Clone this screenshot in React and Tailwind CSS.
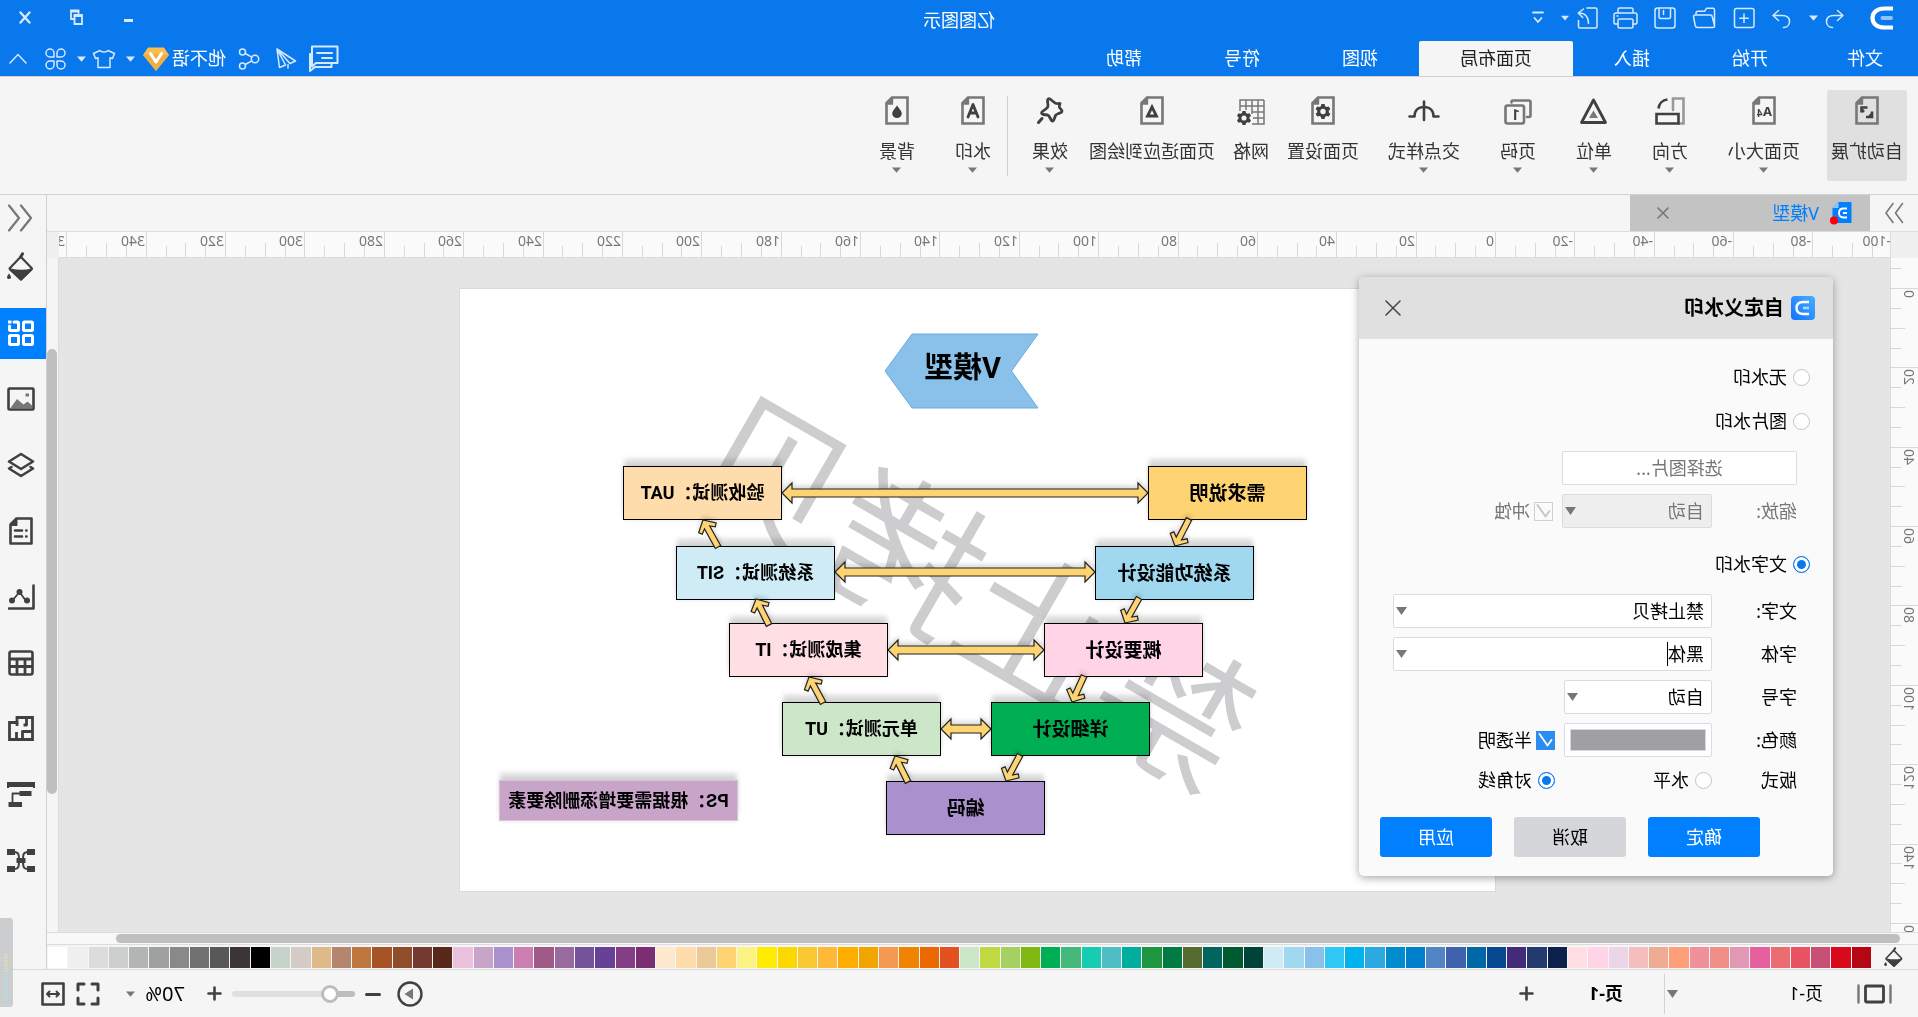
import React from "react";

/* ---------- small shared glyphs ---------- */

const Caret = ({ className = "" }) => (
  <svg className={className} width="9" height="6" viewBox="0 0 9 6" fill="currentColor" aria-hidden="true">
    <path d="M0 0.5h9L4.5 5.8z" />
  </svg>
);

const Svg = ({ w = 24, h = 24, box, className = "", sw = 1.5, children }) => (
  <svg
    className={className}
    width={w}
    height={h}
    viewBox={box || `0 0 ${w} ${h}`}
    fill="none"
    stroke="currentColor"
    strokeWidth={sw}
    strokeLinejoin="round"
    strokeLinecap="round"
    aria-hidden="true"
  >
    {children}
  </svg>
);

const DocOutline = ({ children }) => (
  <Svg w={24} h={29} sw={2}>
    <path d="M1.5 1.5H17l5.500 5.500v20.500h-21z" stroke="#777" strokeWidth="2.600" strokeLinejoin="miter" />
    <path d="M16.500 1.500v6.500h6" fill="#777" stroke="#777" strokeWidth="1.400" />
    {children}
  </Svg>
);

const gearPath =
  "M-1.6-7.4h3.2l.5 2.1 1.6.9 2.1-.7 1.6 2.8-1.6 1.4v1.8l1.6 1.4-1.6 2.8-2.1-.7-1.6.9-.5 2.1h-3.2l-.5-2.1-1.6-.9-2.1.7-1.6-2.8 1.6-1.4v-1.8l-1.6-1.4 1.6-2.8 2.1.7 1.6-.9zM0-2.7a2.7 2.7 0 1 0 0 5.4 2.7 2.7 0 0 0 0-5.4z";

const PaintBucket = ({ w = 28, h = 30 }) => (
  <Svg w={w} h={h} box="0 0 28 30" sw={2.2}>
    <path d="M14.5 4.5 3 16.5l11 11 11.500-11L14 4.500" />
    <path d="M14.300 5 12.500 1.800" strokeWidth="3" />
    <path d="M3.500 17.500c7 2 14 1.500 21.500 0L14 27.500z" fill="currentColor" />
    <path d="M26 21.500c1.400 2 1.900 2.800 1.900 3.700a1.900 1.900 0 0 1-3.800 0c0-.9.500-1.700 1.900-3.700z" fill="currentColor" stroke="none" />
  </Svg>
);

/* ---------- title bar ---------- */

const Logo = () => (
  <svg width="23" height="24" viewBox="0 0 23 24" aria-hidden="true">
    <path d="M0 2.500h8.500c7.500 0 12 4 12 9.500s-4.500 9.500-12 9.500H0" fill="none" stroke="#fff" strokeWidth="4.200" />
    <rect x="0" y="10" width="12.500" height="4" rx="2" fill="#8fc4fb" />
  </svg>
);

const icons = {
  undo: (
    <Svg w={20} h={22}>
      <path d="M7.500 3.500 2 8.500l5.500 5M2.500 8.500H11c4.500 0 7.500 2 7.500 6 0 3.500-2.500 6-6 6" />
    </Svg>
  ),
  redo: (
    <Svg w={20} h={22}>
      <path d="M12.500 3.500 18 8.500l-5.500 5M17.500 8.500H9c-4.500 0-7.500 2-7.500 6 0 3.500 2.500 6 6 6" />
    </Svg>
  ),
  create: (
    <Svg w={22} h={22}>
      <rect x="1" y="1.500" width="19.500" height="19" rx="2" />
      <path d="M11 7v8.500M6.700 11.200h8.600" />
    </Svg>
  ),
  open: (
    <Svg w={24} h={22}>
      <path d="M1.500 20V2.800c0-1 .5-1.500 1.500-1.500h6.500l2 3H18c1.500 0 2 .5 2 2V8M1.500 18.500 3.800 9.500c.2-1 .8-1.500 1.800-1.500h15c1.500 0 2 .7 1.800 2l-1.600 8.500c-.3 1.300-1 2-2.300 2H3c-1 0-1.500-.5-1.500-2z" />
    </Svg>
  ),
  save: (
    <Svg w={22} h={22}>
      <rect x="1" y="1" width="20" height="20" rx="2.500" />
      <path d="M5.500 1.500v8.500c0 1 .5 1.500 1.500 1.500h8.500c1 0 1.500-.5 1.500-1.500V1.500M12.500 3.500v4" />
    </Svg>
  ),
  print: (
    <Svg w={25} h={22}>
      <path d="M5 6V2.500C5 1.600 5.500 1 6.500 1h12c1 0 1.500.6 1.500 1.500V6M5 17H2.800C1.700 17 1 16.300 1 15.200V8c0-1.200.8-2 2-2h19c1.200 0 2 .8 2 2v7.200c0 1.100-.7 1.800-1.800 1.800H20" />
      <rect x="5" y="12" width="15" height="9" rx="1.500" />
      <path d="M20 9h1" />
    </Svg>
  ),
  share: (
    <Svg w={21} h={22}>
      <path d="M11 1H2.500C1.500 1 1 1.500 1 2.500v17c0 1 .5 1.500 1.500 1.500h15.500c1 0 1.500-.5 1.500-1.500v-6" />
      <path d="M14.500 2 19.800 6l-4.500 4.500M19 6c-5.500 0-9.500 3.500-9.500 10.500" />
    </Svg>
  ),
  customize: (
    <Svg w={12} h={14} sw={1.8}>
      <path d="M1 1.500h10M2.500 7l3.500 4 3.500-4" />
    </Svg>
  ),
};

const quickTools = [
  ["撤销", "ml-[21px] w-7", icons.undo],
  ["撤销列表", "w-[14px]", <Caret />],
  ["重做", "ml-[10px] w-8", icons.redo],
  ["新建", "w-[42px]", icons.create],
  ["打开", "w-[38px]", icons.open],
  ["保存", "w-10", icons.save],
  ["打印", "w-[38px]", icons.print],
  ["导出", "w-[38px]", icons.share],
  ["导出选项", "w-[8px]", <Caret />],
  ["自定义", "ml-[13px] w-5", icons.customize],
];

const TitleBar = () => (
  <div className="grid h-[41px] grid-cols-[1fr_auto_1fr] text-[#d6e9ff]">
    <div className="flex pb-[5px]">
      <div className="ml-[25px] flex items-center">
        <Logo />
      </div>
      {quickTools.map(([name, cls, icon]) => (
        <button key={name} aria-label={name} className={"flex shrink-0 items-center justify-center " + cls}>
          {icon}
        </button>
      ))}
    </div>
    <h1 className="flex items-center text-[18px] text-white">亿图图示</h1>
    <div className="flex justify-end pb-[7px]">
      <button aria-label="最小化" className="flex w-[52px] items-center justify-center pt-[6px]">
        <span className="h-[3px] w-[9px] bg-current" />
      </button>
      <button aria-label="还原" className="flex w-[52px] items-center justify-center">
        <Svg w={13} h={16} sw={1.8}>
          <path d="M4.500 4V1.500h7.500V10H8.500" strokeLinejoin="miter" />
          <path d="M1 6h7.500v9H1z" strokeLinejoin="miter" />
          <path d="M1 7h7.500M4.500 2.500H12" />
        </Svg>
      </button>
      <button aria-label="关闭" className="flex w-[51px] items-center justify-center">
        <Svg w={12} h={13} sw={2.4}>
          <path d="M1.500 1.500l9 10M10.500 1.500l-9 10" />
        </Svg>
      </button>
    </div>
  </div>
);

const menus = [
  ["文件", "pl-[35px] pr-[38px]"],
  ["开始", "px-[41px]"],
  ["插入", "px-[41px]"],
  ["页面布局", "px-[41px]"],
  ["视图", "px-[41px]"],
  ["符号", "px-[41px]"],
  ["帮助", "px-[41px]"],
];

const MenuBar = () => (
  <div className="flex h-[35px] justify-between text-[18px] text-white">
    <nav className="flex">
      {menus.map(([name, pad]) => (
        <button
          key={name}
          className={
            pad + " flex items-center " + (name === "页面布局" ? "rounded-t-[2px] bg-[#f5f5f5] text-[#222]" : "")
          }
        >
          {name}
        </button>
      ))}
    </nav>
    <div className="flex text-[#d6e9ff]">
      <button aria-label="消息" className="flex w-[38px] items-center justify-center">
        <Svg w={31} h={27} sw={2}>
          <path d="M27 9h2v17l-5-4H7.500v-4" />
          <path d="M1.500 1.500h25.500v20l-4-3.500H1.500z" />
          <path d="M7 8h15M7 13h10" />
        </Svg>
      </button>
      <button aria-label="发送" className="flex w-[38px] items-center justify-center">
        <Svg w={22} h={22}>
          <path d="M20 1 1.500 13l5.500 2.500L20 1l-2.500 18.500-6-2.500L20 1M9 16.500V20" />
        </Svg>
      </button>
      <button aria-label="分享" className="mr-[5px] flex w-9 items-center justify-center">
        <Svg w={22} h={22}>
          <circle cx="5" cy="11" r="3.700" />
          <circle cx="17.500" cy="4" r="3" />
          <circle cx="17.500" cy="18" r="3" />
          <path d="M8.200 9.200 14.800 5.500M8.200 12.800l6.600 3.700" />
        </Svg>
      </button>
      <button className="flex items-center gap-[2px] text-white">
        他不语
        <svg className="w-7" width="28" height="26" viewBox="0 0 28 26" aria-hidden="true">
          <path d="M6 1.500h16l5 7.500-13 16L1 9z" fill="#fbbd4e" />
          <path d="M1 9l13 16L27 9l-9-1z" fill="#eaa541" opacity=".6" />
          <path d="M8.500 7.500 14 16l5.500-8.500" fill="none" stroke="#fff" strokeWidth="3" strokeLinecap="round" strokeLinejoin="round" />
        </svg>
      </button>
      <button aria-label="帐户菜单" className="flex w-[22px] items-center justify-center">
        <Caret />
      </button>
      <button aria-label="主题" className="flex w-8 items-center justify-center">
        <Svg w={24} h={20}>
          <path d="M8 1.500c1.500 2 6.500 2 8 0l6.500 3-2 5-2.500-.7V18.500H6V8.800l-2.500.7-2-5z" />
        </Svg>
      </button>
      <button aria-label="主题选项" className="flex w-3 items-center justify-center">
        <Caret />
      </button>
      <button aria-label="应用" className="flex w-10 items-center justify-center">
        <Svg w={21} h={22}>
          <path d="M9 9V5a4 4 0 1 0-4 4zM12 9V5a4 4 0 1 1 4 4zM9 13v4a4 4 0 1 1-4-4zM12 13v4a4 4 0 1 0 4-4z" />
        </Svg>
      </button>
      <button aria-label="收起功能区" className="flex w-9 items-center justify-center">
        <Svg w={18} h={11}>
          <path d="M1 10l8-8.500L17 10" />
        </Svg>
      </button>
    </div>
  </div>
);

/* ---------- ribbon ---------- */

const ribbon = [
  {
    name: "自动扩展",
    cls: "w-20 rounded-[2px] bg-[#e0e0e0]",
    icon: (
      <DocOutline>
        <path d="M11.500 11.500h6v5M7 15.500v5.500h6M15 14l2 2M9.500 18.500l-2 2" stroke="#404040" strokeWidth="2.600" strokeLinejoin="miter" strokeLinecap="butt" />
      </DocOutline>
    ),
  },
  {
    name: "页面大小",
    cls: "ml-[7px] px-5",
    drop: true,
    icon: (
      <DocOutline>
        <text x="4" y="20" fontSize="13" fontWeight="700" fill="#404040" stroke="none" fontFamily="Noto Sans">A</text>
        <text x="13.500" y="21" fontSize="10" fontWeight="700" fill="#404040" stroke="none" fontFamily="Noto Sans">4</text>
      </DocOutline>
    ),
  },
  {
    name: "方向",
    cls: "px-5",
    drop: true,
    icon: (
      <Svg w={30} h={29} sw={2.6}>
        <path d="M12 14V2.500H1.500v25H6" stroke="#999" strokeLinejoin="miter" />
        <path d="M6.500 18h22v9.500h-22z" stroke="#404040" strokeLinejoin="miter" />
        <path d="M17.500 3.500c5 .5 8.500 4 9 9" stroke="#404040" strokeLinecap="butt" />
      </Svg>
    ),
  },
  {
    name: "单位",
    cls: "px-5",
    drop: true,
    icon: (
      <Svg w={29} h={29} sw={2.8}>
        <path d="M14.500 4 26.500 26.500h-24z" stroke="#404040" />
        <path d="M14.500 14.500l4.500 7.500h-9z" fill="#777" stroke="none" />
      </Svg>
    ),
  },
  {
    name: "页码",
    cls: "px-5",
    drop: true,
    icon: (
      <Svg w={28} h={29} sw={2.6}>
        <rect x="8" y="9.500" width="18.500" height="18" rx="2" stroke="#777" />
        <path d="M5 21H3c-1 0-1.500-.5-1.500-1.500V6c0-1 .5-1.500 1.500-1.500h16c1 0 1.500.5 1.500 1.500v.5" stroke="#777" />
        <text x="12" y="24" fontSize="15" fontWeight="700" fill="#404040" stroke="none" fontFamily="Roboto">1</text>
      </Svg>
    ),
  },
  {
    name: "交点样式",
    cls: "px-5",
    drop: true,
    icon: (
      <Svg w={32} h={29} sw={2.6}>
        <path d="M1.500 20.500h5c0-6 4-9.500 9.500-9.500s9.500 3.500 9.500 9.500h5M16 5.500V24" stroke="#404040" />
      </Svg>
    ),
  },
  {
    name: "页面设置",
    cls: "px-[9px]",
    icon: (
      <DocOutline>
        <path d={gearPath} transform="translate(12 15.500)" fill="#404040" fillRule="evenodd" stroke="none" />
      </DocOutline>
    ),
  },
  {
    name: "网格",
    cls: "px-[9px]",
    icon: (
      <Svg w={29} h={29} sw={1.5}>
        <path d="M1 4h24v11M1 4v24h12M7 4v24M13 4v14M19 4v10M1 10h24M1 16h12M1 22h11" stroke="#777" strokeLinecap="butt" strokeLinejoin="miter" />
        <path d={gearPath} transform="translate(21 22) scale(.95)" fill="#404040" fillRule="evenodd" stroke="none" />
      </Svg>
    ),
  },
  {
    name: "页面适应到绘图",
    cls: "px-[9px]",
    icon: (
      <DocOutline>
        <path d="M12 11l4.500 9h-9z" stroke="#404040" strokeWidth="2.800" strokeLinejoin="miter" />
      </DocOutline>
    ),
  },
  {
    name: "效果",
    cls: "px-[12px]",
    drop: true,
    icon: (
      <Svg w={28} h={29} sw={2.8}>
        <path d="M4 7.500Q7 8 9 7L14 3Q16.500 2 16.500 5L16 9.500Q16 11 17 12L21.500 15.500Q23.500 17.500 21 18.500L16.500 19Q15 19.500 14.500 21L12.500 24.500Q11 26 10 23.500L8.500 19.500Q8 18.500 6.500 18L3 16.500Q1.500 15.500 2.500 14L4.500 11.500Q5 10.500 4 7.500z" stroke="#404040" />
        <path d="M22 22.500l3.500 4" stroke="#404040" strokeWidth="3" />
      </Svg>
    ),
  },
  { divider: true },
  {
    name: "水印",
    cls: "px-4",
    drop: true,
    icon: (
      <DocOutline>
        <path d="M7 21l5-12.500L17 21M9 17h6" stroke="#404040" strokeWidth="2.800" />
      </DocOutline>
    ),
  },
  {
    name: "背景",
    cls: "px-6",
    drop: true,
    icon: (
      <DocOutline>
        <path d="M12 9.500c3 4 4.800 6 4.800 8a4.800 4.500 0 0 1-9.600 0c0-2 1.800-4 4.800-8z" fill="#404040" stroke="none" />
      </DocOutline>
    ),
  },
];

const Ribbon = () => (
  <div className="flex h-[119px] shrink-0 items-start border-y border-[#d2d2d2] bg-[#f5f5f5] pl-[11px] pt-[13px]">
    {ribbon.map((item, i) =>
      item.divider ? (
        <div key={i} className="ml-[12px] mt-[6px] h-20 w-px bg-[#cfcfcf]" />
      ) : (
        <button key={i} className={"flex h-[91px] shrink-0 flex-col items-center pt-[6px] " + item.cls}>
          {item.icon}
          <span className="mt-[17px] whitespace-nowrap text-[18px] leading-[18px] text-[#333]">{item.name}</span>
          {item.drop && <Caret className="mt-[7px] text-[#777]" />}
        </button>
      )
    )}
  </div>
);

/* ---------- document tabs, rulers ---------- */

const DocTabs = () => (
  <div className="flex h-[37px] shrink-0 border-b border-[#dcdcdc] bg-[#f5f5f5]">
    <button aria-label="展开左侧面板" className="flex w-12 items-center justify-center text-[#777]">
      <Svg w={20} h={22} sw={1.600}>
        <path d="M1.500 1.500l7 9.500-7 9.500M11 1.500l7 9.500-7 9.500" />
      </Svg>
    </button>
    <div className="flex w-60 items-center bg-[#c3c3c3] pl-[18px]">
      <svg width="24" height="26" viewBox="0 0 24 26" aria-hidden="true">
        <path d="M1.500 2h12l6 6v15h-18c-.7 0-1-.3-1-1V3c0-.7.3-1 1-1z" fill="#007fff" />
        <path d="M13.500 2v6h6z" fill="#8cc5ff" />
        <path d="M5 8.500h3.500c3 0 4.500 1.700 4.500 4.500s-1.500 4.500-4.500 4.500H5M5 13h4" fill="none" stroke="#fff" strokeWidth="1.800" />
        <circle cx="18" cy="20.500" r="4" fill="#f00" />
      </svg>
      <span className="ml-[9px] flex-1 text-[18px] text-[#007fff]">V模型</span>
      <button aria-label="关闭文档" className="mr-[27px] text-[#777]">
        <Svg w={12} h={12} sw={1.600}>
          <path d="M1 1l10 10M11 1L1 11" />
        </Svg>
      </button>
    </div>
  </div>
);

const UNIT = 79.37;
const ticks = (from, to) => {
  const out = [];
  for (let k = from; k <= to; k++) out.push(k);
  return out;
};

const HRuler = () => (
  <div className="relative h-[26px] overflow-hidden border-b border-l border-[#dcdcdc] bg-[#fafafa] text-[14px] leading-[17px] text-[#777]">
    {ticks(-20, 72).map((k) => {
      const major = k % 4 === 0;
      const half = k % 2 === 0;
      return (
        <div
          key={k}
          className={
            "absolute bottom-0 border-l border-[#d8d8d8] pl-[1px] " + (major ? "h-[25px]" : half ? "h-[14px]" : "h-[11px]")
          }
          style={{ left: Math.round(394 + (k * UNIT) / 4) }}
        >
          {major ? k * 5 : null}
        </div>
      );
    })}
  </div>
);

const VRuler = () => (
  <div className="relative overflow-hidden bg-[#fafafa] text-[14px] leading-[18px] text-[#777]">
    {ticks(-1, 32).map((k) => {
      const major = k % 4 === 0;
      const half = k % 2 === 0;
      return (
        <div
          key={k}
          className={"absolute right-0 border-t border-[#d8d8d8] " + (major ? "w-full" : half ? "w-[14px]" : "w-[11px]")}
          style={{ top: Math.round(30 + (k * UNIT) / 4) }}
        >
          {major && (
            <span className="absolute left-0 top-px rotate-180 [writing-mode:vertical-rl]">{k * 5}</span>
          )}
        </div>
      );
    })}
  </div>
);

/* ---------- drawing page ---------- */

/* Page content is placed in canvas coordinates; the page's corner is the origin. */
const OX = 423;
const OY = 289;

const nodes = [
  { t: "需求说明", x: 611, y: 466, c: "bg-[#fed472] text-[19px]" },
  { t: "系统功能设计", x: 664, y: 546, c: "bg-[#a0d8ef] text-[19px]" },
  { t: "概要设计", x: 715, y: 623, c: "bg-[#ffd4e6] text-[19px]" },
  { t: "详细设计", x: 768, y: 702, c: "bg-[#00af53] text-[19px]" },
  { t: "编码", x: 873, y: 781, c: "bg-[#aa91cd] text-[19px]" },
  { t: "单元测试：UT", x: 977, y: 702, c: "bg-[#cce6c8] text-[18px]" },
  { t: "集成测试：IT", x: 1030, y: 623, c: "bg-[#ffdfe4] text-[18px]" },
  { t: "系统测试：SIT", x: 1083, y: 546, c: "bg-[#ceebf6] text-[18px]" },
  { t: "验收测试：UAT", x: 1136, y: 466, c: "bg-[#fedcab] text-[18px]" },
];

const links = [
  [770, 1136, 493],
  [823, 1083, 572],
  [874, 1030, 650],
  [927, 977, 729],
];

/* tail x, tail y, tip x, tip y */
const steps = [
  [729, 519, 743, 546],
  [779, 598, 793, 623],
  [834, 676, 846, 702],
  [898, 755, 912, 781],
  [1010, 782, 1023, 756],
  [1095, 703, 1109, 677],
  [1149, 625, 1162, 599],
  [1200, 547, 1215, 520],
];

const Connectors = () => (
  <svg
    className="absolute left-0 top-0 h-full w-full drop-shadow-[0_-3px_2px_rgba(0,0,0,0.15)]"
    viewBox={`${OX} ${OY} 1035 602`}
    fill="#fed472"
    stroke="#222"
    strokeWidth="1.200"
    aria-hidden="true"
  >
    {links.map(([a, b, y]) => (
      <polygon
        key={y}
        points={`${a},${y} ${a + 10},${y - 10} ${a + 10},${y - 4} ${b - 10},${y - 4} ${b - 10},${y - 10} ${b},${y} ${b - 10},${y + 10} ${b - 10},${y + 4} ${a + 10},${y + 4} ${a + 10},${y + 10}`}
      />
    ))}
    {steps.map(([x0, y0, x1, y1]) => {
      const len = Math.hypot(x0 - x1, y0 - y1);
      const deg = (Math.atan2(y0 - y1, x0 - x1) * 180) / Math.PI;
      return (
        <polygon
          key={x0}
          transform={`translate(${x1} ${y1}) rotate(${deg})`}
          points={`0,0 9,-10 12,-7.500 8.500,-3 ${len},-3 ${len},3 8.500,3 12,7.500 9,10`}
        />
      );
    })}
  </svg>
);

const nodeShadow = "shadow-[0_-8px_5px_-1px_rgba(0,0,0,0.15),0_0_4px_rgba(0,0,0,0.1)]";

const Page = () => (
  <div className="absolute left-[394px] top-[30px] h-[604px] w-[1037px] border border-[#d9d9d9] bg-white font-['Roboto','Noto_Sans_CJK_SC',sans-serif] font-bold text-black">
    <div className="absolute left-1/2 top-[294px] -translate-x-1/2 -translate-y-1/2 -rotate-30 whitespace-nowrap font-['Noto_Sans_CJK_SC',sans-serif] text-[154px] font-[350] leading-none text-[#cdcdcf]">
      禁止拷贝
    </div>

    <svg className="absolute left-[456px] top-[44px]" width="155" height="76" viewBox="0 0 155 76" aria-hidden="true">
      <path d="M1 1h126l27 37-27 37H1l26.500-37z" fill="#8ac1ea" stroke="#6aabdc" />
    </svg>
    <div className="absolute left-[456px] top-[44px] flex h-[72px] w-[153px] items-center justify-center text-[29px]">
      V模型
    </div>

    {nodes.map((n) => (
      <div
        key={n.t}
        className={
          n.c +
          " absolute flex h-[54px] w-[159px] items-center justify-center whitespace-nowrap border border-black leading-none " +
          nodeShadow
        }
        style={{ left: n.x - OX, top: n.y - OY }}
      >
        {n.t}
      </div>
    ))}

    <div
      className={
        "absolute left-[757px] top-[491px] flex h-[41px] w-[239px] items-center justify-center whitespace-nowrap border border-[#dcc3dd] bg-[#c7a4c8] text-[18px] leading-none " +
        nodeShadow
      }
    >
      PS：根据需要增添删除要素
    </div>

    <Connectors />
  </div>
);

/* ---------- watermark dialog ---------- */

const radioCls =
  "h-[17px] w-[17px] shrink-0 appearance-none rounded-full border border-[#c4c4c4] bg-white checked:border-[#0a78ed] checked:bg-[#0a78ed] checked:shadow-[inset_0_0_0_3px_white]";

const Radio = ({ label, name, checked }) => (
  <label className="flex items-center gap-[6px] whitespace-nowrap">
    <input type="radio" name={name} defaultChecked={checked} className={radioCls} />
    {label}
  </label>
);

const Check = ({ label, disabled, className = "" }) => (
  <label className={"flex items-center gap-[4px] " + (disabled ? "text-[#777] " : "") + className}>
    <span className="grid h-[19px] w-[19px] place-items-center">
      <input
        type="checkbox"
        defaultChecked
        disabled={disabled}
        className={
          "col-start-1 row-start-1 h-[19px] w-[19px] appearance-none " +
          (disabled ? "border border-[#d0d0d4] bg-[#fafafa]" : "bg-[#2d8cf0]")
        }
      />
      <Svg w={15} h={14} sw={1.800} className={"col-start-1 row-start-1 " + (disabled ? "text-[#c4c4c8]" : "text-white")}>
        <path d="M1.500 7l4 5.500 8-11.500" />
      </Svg>
    </span>
    {label}
  </label>
);

const boxCls = "flex h-[34px] items-center rounded-[2px] border border-[#dcdce0] bg-white";

const Select = ({ id, value, width, disabled }) => (
  <div className={"grid items-center " + width}>
    <select
      id={id}
      disabled={disabled}
      className={
        "col-start-1 row-start-1 h-[34px] w-full appearance-none rounded-[2px] border border-[#dcdce0] pl-[7px] opacity-100 " +
        (disabled ? "bg-[#eeeeee] text-[#777]" : "bg-white")
      }
    >
      <option>{value}</option>
    </select>
    <Tri className="pointer-events-none col-start-1 row-start-1 mr-[3px] justify-self-end" />
  </div>
);

const Tri = ({ className = "" }) => (
  <svg className={className + " text-[#777]"} width="11" height="8" viewBox="0 0 11 8" fill="currentColor" aria-hidden="true">
    <path d="M0 0h11L5.500 8z" />
  </svg>
);

const Row = ({ label, htmlFor, children }) => (
  <div className="flex h-[34px] items-center">
    {htmlFor ? (
      <label htmlFor={htmlFor} className="w-[85px]">
        {label}
      </label>
    ) : (
      <span className="w-[85px]">{label}</span>
    )}
    {children}
  </div>
);

const dialogButton = "h-10 w-28 rounded-[3px] text-[18px]";

const WatermarkDialog = () => (
  <section
    role="dialog"
    aria-label="自定义水印"
    className="absolute left-[57px] top-[19px] w-[474px] rounded-[5px] bg-[#fafafa] pb-[19px] text-[18px] leading-[22px] text-black shadow-[0_2px_8px_rgba(0,0,0,0.35)]"
  >
    <header className="flex h-[62px] items-center rounded-t-[5px] bg-[#e0e0e0] pl-[18px] pr-[26px]">
      <svg width="24" height="24" viewBox="0 0 24 24" aria-hidden="true">
        <defs>
          <linearGradient id="lg" x1="0" y1="0" x2="1" y2="1">
            <stop offset="0" stopColor="#4aaeff" />
            <stop offset="1" stopColor="#0f72ff" />
          </linearGradient>
        </defs>
        <rect width="24" height="24" rx="4" fill="url(#lg)" />
        <path d="M6 6h5.500C16 6 18.500 8.300 18.500 12s-2.500 6-7 6H6" fill="none" stroke="#fff" strokeWidth="2.400" />
        <path d="M6 12h6" stroke="#a9d5ff" strokeWidth="2.600" />
      </svg>
      <h2 className="ml-[7px] flex-1 text-[20px] font-bold">自定义水印</h2>
      <button aria-label="关闭对话框" className="text-[#444]">
        <Svg w={16} h={16} sw={1.500}>
          <path d="M1 1l14 14M15 1L1 15" />
        </Svg>
      </button>
    </header>

    <div className="flex flex-col pl-[23px] pt-[27px]">
      <Radio name="kind" label="无水印" />
      <div className="mt-[22px]">
        <Radio name="kind" label="图片水印" />
      </div>
      <button className="ml-[13px] mt-[19px] h-[34px] w-[235px] rounded-[2px] border border-[#dcdce0] bg-white text-[#777]">
        选择图片...
      </button>
      <div className="ml-[13px] mt-[9px] text-[#777]">
        <Row label="缩放:" htmlFor="scale">
          <Select id="scale" value="自动" width="w-[150px]" disabled />
          <Check label="冲蚀" disabled className="ml-[9px]" />
        </Row>
      </div>
      <div className="mt-[25px]">
        <Radio name="kind" label="文字水印" checked />
      </div>

      <div className="ml-[13px] mt-[19px] flex flex-col gap-[9px]">
        <Row label="文字:" htmlFor="words">
          <Select id="words" value="禁止拷贝" width="w-[319px]" />
        </Row>
        <Row label="字体" htmlFor="font">
          <div className={boxCls + " w-[319px] pl-[7px] pr-[2px]"}>
            <input id="font" defaultValue="黑体" className="w-9 bg-transparent outline-none" />
            <span className="h-6 w-px bg-black" />
            <Tri className="ml-auto" />
          </div>
        </Row>
        <Row label="字号" htmlFor="size">
          <Select id="size" value="自动" width="w-[148px]" />
        </Row>
        <Row label="颜色:">
          <button aria-label="颜色" className={boxCls + " w-[148px] px-[5px]"}>
            <span className="h-[22px] flex-1 border border-[#d8d8dc] bg-[#a09fa4]" />
          </button>
          <Check label="半透明" className="ml-[9px]" />
        </Row>
      </div>
      <div className="ml-[13px] mt-[12px] flex h-[22px] items-center">
        <span className="w-[85px]">版式</span>
        <div className="w-[157px]">
          <Radio name="layout" label="水平" />
        </div>
        <Radio name="layout" label="对角线" checked />
      </div>
    </div>

    <footer className="mt-[26px] flex gap-[22px] pl-[73px]">
      <button className={dialogButton + " bg-[#007fff] text-white"}>确定</button>
      <button className={dialogButton + " bg-[#d5d6da]"}>取消</button>
      <button className={dialogButton + " bg-[#007fff] text-white"}>应用</button>
    </footer>
  </section>
);

/* ---------- right tool strip ---------- */

const side = [
  ["样式", <PaintBucket />],
  [
    "符号库",
    <Svg w={26} h={26} sw={3}>
      <rect x="1.500" y="2" width="9" height="8.500" rx="1" />
      <path d="M24.500 6v3.500c0 .7-.3 1-1 1h-7c-.7 0-1-.3-1-1V3c0-.7.3-1 1-1H20" />
      <path d="M24 2h.5" strokeLinecap="square" />
      <rect x="1.500" y="15.500" width="9" height="9" rx="1" />
      <rect x="15.500" y="15.500" width="9" height="9" rx="1" />
    </Svg>,
  ],
  [
    "图片",
    <Svg w={28} h={24} sw={2.600}>
      <rect x="1.500" y="1.500" width="25" height="21" rx="1" />
      <path d="M3 21v-2.500l4.500-4 4 3 6.500-5.500L24.500 21z" fill="#777" stroke="none" />
      <rect x="6" y="6.500" width="3.500" height="3" fill="#777" stroke="none" />
    </Svg>,
  ],
  [
    "图层",
    <Svg w={28} h={26} sw={2.600}>
      <path d="M14 2l12 7.500L14 17 2 9.500zM4.500 15 2 16.500 14 24l12-7.500L23.500 15" />
    </Svg>,
  ],
  [
    "属性",
    <Svg w={24} h={28} sw={2.600}>
      <path d="M1.500 1.500h15l6 6v19h-21z" />
      <path d="M16 2v6.500h6z" fill="currentColor" strokeWidth="1" />
      <path d="M6.500 13.500h.3M11 13.500h7M6.500 19.500h.3M11 19.500h7" />
    </Svg>,
  ],
  [
    "图表",
    <Svg w={27} h={26} sw={2.600}>
      <path d="M1.500 1.500v23h24.500" />
      <path d="M9 17l6.500-9L23 17" strokeWidth="1.800" />
      <circle cx="8" cy="16.500" r="3" fill="currentColor" stroke="none" />
      <circle cx="15.500" cy="8" r="3" fill="currentColor" stroke="none" />
      <circle cx="23" cy="16.500" r="3" fill="currentColor" stroke="none" />
    </Svg>,
  ],
  [
    "表格",
    <Svg w={26} h={26} sw={2.600}>
      <rect x="1.500" y="1.500" width="23" height="23" rx="2" />
      <path d="M2 9h22M2 16.500h22M9 9v15M17 9v15" strokeWidth="2.800" />
    </Svg>,
  ],
  [
    "平面图",
    <Svg w={26} h={25} sw={2.800}>
      <path d="M1.500 1.500h15.500v5h7.500v17h-23z" strokeLinejoin="miter" />
      <path d="M17 6.500V10M7.500 2v7h3M2 15.500h9.500v8M17.500 23v-7" strokeLinecap="butt" />
    </Svg>,
  ],
  [
    "甘特图",
    <Svg w={28} h={25} sw={1.800}>
      <path d="M0 0h28v6h-2V5H2v1H0z" fill="currentColor" stroke="none" />
      <path d="M3.500 9h12v5h-12zM13 20h13.500v5H13z" fill="currentColor" stroke="none" />
      <path d="M15.500 11.500H22.500V20" />
    </Svg>,
  ],
  [
    "思维导图",
    <Svg w={28} h={25} sw={2}>
      <path d="M0 1h8v6H0zM20 1h8v6h-8zM0 18h8v6H0zM20 18h8v6h-8zM9.500 10h9v5h-9z" fill="currentColor" stroke="none" />
      <path d="M7 4c5 0 5 3 5 8.500s0 8.500-5 8.500M21 4c-5 0-5 3-5 8.500s0 8.500 5 8.500" />
    </Svg>,
  ],
];

const SideTools = () => (
  <aside className="flex w-[47px] shrink-0 flex-col border-l border-[#cfcfcf] bg-[#f5f5f5] text-[#404040]">
    <button aria-label="展开右侧面板" className="flex h-[37px] items-end justify-center pl-[6px] text-[#777]">
      <Svg w={28} h={28} sw={2.200} className="shrink-0">
        <path d="M13 1.500 3 14l10 12.500M25 1.500 15 14l10 12.500" />
      </Svg>
    </button>
    <div className="mt-[10px] flex flex-col gap-[15px]">
      {side.map(([name, icon], i) => (
        <button
          key={name}
          aria-label={name}
          className={
            "flex h-[51px] shrink-0 items-center justify-center pb-[2px] pl-[3px] " +
            (i === 1 ? "bg-[#007fff] text-white" : "")
          }
        >
          {icon}
        </button>
      ))}
    </div>
  </aside>
);

/* ---------- colour strip and status bar ---------- */

const palette =
  "b50713 d7091b c84f76 e85464 ec6d71 e7609e e198b4 ef8f88 f0909b ff9f7a efab93 f5bdbc ead6e8 ffd4e6 ffdfe4 0d204b 233a6e 422b78 05488f 0068a7 3e62ad 5384c5 007fcd 008ccd 2ca9e1 00b2ee 2fc8f5 8ac1ea a0d8ef ceebf6 004338 005a30 00645f 556b2f 007b43 1e9640 00ae9d 4fbdc4 16cdb4 45b97c 00af53 80b711 a5d163 c0d943 cce6c8 e25120 ec6800 f08300 f39951 f2a400 ffae00 feb938 fac932 fdd800 ffec00 fdf284 fed472 ebca98 fedcab fde9cf 7b2e72 843e85 674196 745399 986a9e a05a88 cd7eb1 aa91cd c7a4c8 ebc2dd 58291a 743a31 8f4d2a a65325 be773f b5866d dfb989 d5cbc6 c8d3cb 000000 3c3535 595757 727171 898989 9ea19f b3b5b4 cdcfce dcdcdc efefef ffffff".split(
    " "
  );

const PaletteBar = () => (
  <div className="flex h-6 shrink-0 items-center bg-[#f5f5f5]">
    <div className="flex w-[47px] justify-center text-[#404040]">
      <PaintBucket w={20} h={21} />
    </div>
    <div className="flex flex-1 gap-px pr-px">
      {palette.map((c) => (
        <button key={c} aria-label={"#" + c} className="h-[21px] flex-1" style={{ backgroundColor: "#" + c }} />
      ))}
    </div>
  </div>
);

const Plus = ({ className = "" }) => (
  <Svg w={15} h={15} sw={2.600} className={className}>
    <path d="M7.500 1.500v12M1.500 7.500h12" />
  </Svg>
);

const StatusBar = () => (
  <footer className="flex h-[48px] shrink-0 items-center border-t border-[#dadada] bg-[#f5f5f5] text-[18px] text-[#404040]">
    <button aria-label="页面列表" className="ml-[26px]">
      <Svg w={35} h={20} sw={2.800}>
        <path d="M1.500 1.500v17M33.500 1.500v17" stroke="#777" strokeWidth="2.400" />
        <rect x="8.500" y="2" width="18" height="16" rx="1" />
      </Svg>
    </button>
    <button className="ml-[34px] flex w-[156px] items-center justify-between text-black">
      页-1
      <Tri />
    </button>
    <div className="ml-[2px] h-10 w-px bg-[#d4d4d4]" />
    <button className="ml-[41px] font-bold text-black">页-1</button>
    <button aria-label="添加页" className="ml-[55px]">
      <Plus />
    </button>

    <div className="ml-auto flex items-center">
      <button aria-label="演示">
        <Svg w={26} h={26} sw={2.400}>
          <circle cx="13" cy="13" r="11.500" />
          <path d="M10 7.500v11l8.500-5.500z" fill="#777" stroke="none" />
        </Svg>
      </button>
      <button aria-label="缩小" className="ml-[16px] flex h-6 items-center pt-[2px]">
        <span className="h-[3px] w-4 rounded bg-current" />
      </button>
      <input
        type="range"
        aria-label="缩放"
        min="0"
        max="100"
        defaultValue="15"
        className="ml-[10px] h-[6px] w-[123px] appearance-none rounded-full bg-[linear-gradient(to_right,#bdbdbd_20%,#dfdfdf_20%)] [&::-webkit-slider-thumb]:h-[18px] [&::-webkit-slider-thumb]:w-[18px] [&::-webkit-slider-thumb]:appearance-none [&::-webkit-slider-thumb]:rounded-full [&::-webkit-slider-thumb]:border-[3px] [&::-webkit-slider-thumb]:border-solid [&::-webkit-slider-thumb]:border-[#bdbdbd] [&::-webkit-slider-thumb]:bg-white"
      />
      <button aria-label="放大" className="ml-[10px]">
        <Plus />
      </button>
      <button className="ml-[22px] flex w-[59px] items-center justify-between text-[20px] text-black">
        70%
        <Caret className="text-[#777]" />
      </button>
      <button aria-label="全屏" className="ml-[26px]">
        <Svg w={24} h={24} sw={3}>
          <path d="M2 8V2h6M16 2h6v6M22 16v6h-6M8 22H2v-6" />
        </Svg>
      </button>
      <button aria-label="适应宽度" className="ml-[11px] mr-[41px]">
        <Svg w={24} h={24} sw={2.600}>
          <rect x="1.500" y="1.500" width="21" height="21" />
          <path d="M6.500 12h11M8.500 9.500 6 12l2.500 2.500M15.500 9.500 18 12l-2.500 2.500" strokeWidth="2" />
        </Svg>
      </button>
    </div>
  </footer>
);

const levels = Array.from({ length: 24 }, (_, i) => i);

/* The whole window is shown as a mirror image. */
export default function App() {
  return (
    <div className="relative flex h-screen w-full -scale-x-100 flex-col overflow-hidden bg-[#f5f5f5] font-['Noto_Sans','Noto_Sans_CJK_SC',sans-serif]">
      <header className="shrink-0 bg-[#0a78ed]">
        <TitleBar />
        <MenuBar />
      </header>
      <Ribbon />

      <main className="flex min-h-0 flex-1">
        <div className="flex min-w-0 flex-1 flex-col">
          <DocTabs />
          <div className="grid min-h-0 flex-1 grid-cols-[27px_1fr_12px] grid-rows-[26px_1fr]">
            <div className="bg-[#f0f0f0]" />
            <HRuler />
            <div className="bg-[#f0f0f0]" />
            <VRuler />
            <div className="relative overflow-hidden border-l border-[#dcdcdc] bg-[#e5e5e5]">
              <Page />
              <WatermarkDialog />
            </div>
            <div className="flex flex-col items-center border-l border-[#dcdcdc] bg-[#f5f5f5] pt-[91px]">
              <div className="h-[445px] w-[10px] rounded-full bg-[#bfbfbf]" />
            </div>
          </div>
          <div className="flex h-[13px] shrink-0 items-center border-y border-[#dcdcdc] bg-[#f8f8f8] pl-[18px] pr-[69px]">
            <div className="h-[9px] flex-1 rounded-full bg-[#bfbfbf]" />
          </div>
          <PaletteBar />
        </div>
        <SideTools />
      </main>

      <StatusBar />

      <div className="absolute bottom-[10px] right-0 flex h-[89px] w-[13px] flex-col items-center justify-end gap-px rounded-l-[3px] bg-[#c6c9cb]/90 pb-[6px]">
        {levels.map((i) => (
          <span key={i} className={"h-px w-1 " + (i < 9 ? "bg-[#e0dcb8]" : "bg-[#b5dbe6]")} />
        ))}
      </div>
    </div>
  );
}
